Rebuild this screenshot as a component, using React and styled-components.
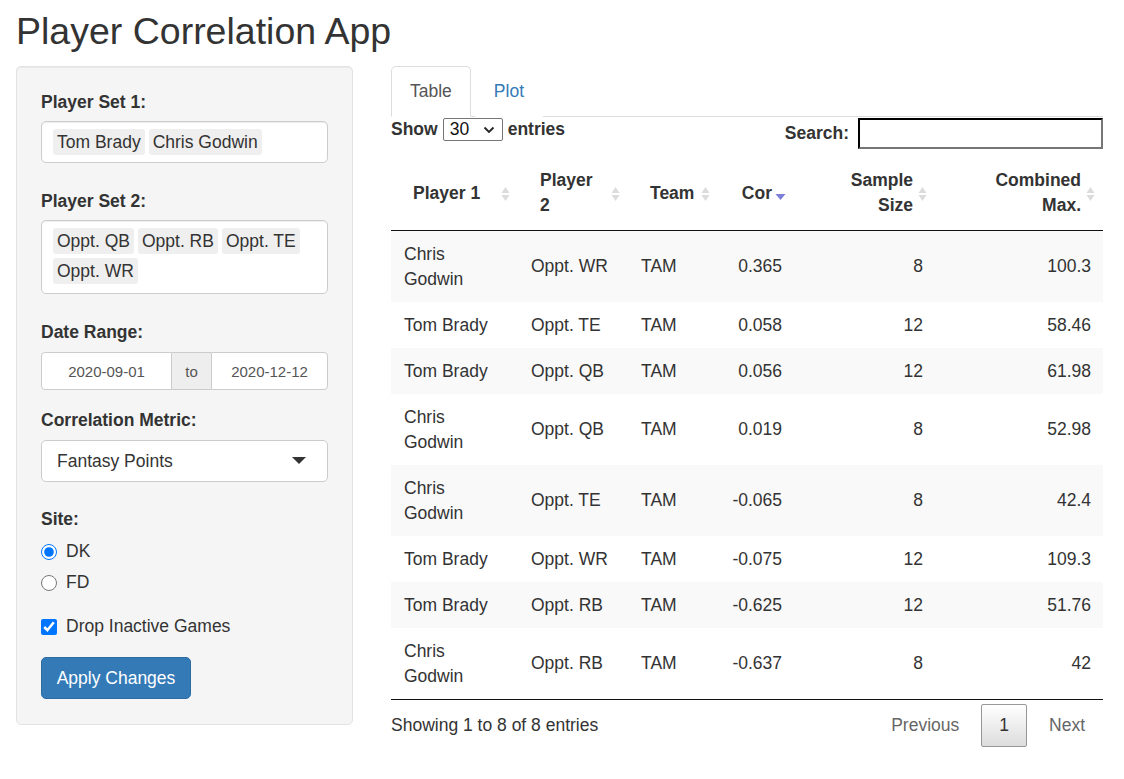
import styled, { createGlobalStyle } from 'styled-components';

const GlobalStyle = createGlobalStyle`
  html, body {
    margin: 0;
    padding: 0;
    background: #fff;
  }
  body {
    font-family: "Liberation Sans", Arial, sans-serif;
    font-size: 17.5px;
    line-height: 25px;
    color: #333;
  }
  * { box-sizing: border-box; }
`;

const rows = [
  { p1: 'Chris Godwin', p2: 'Oppt. WR', team: 'TAM', cor: '0.365', n: 8, max: '100.3' },
  { p1: 'Tom Brady', p2: 'Oppt. TE', team: 'TAM', cor: '0.058', n: 12, max: '58.46' },
  { p1: 'Tom Brady', p2: 'Oppt. QB', team: 'TAM', cor: '0.056', n: 12, max: '61.98' },
  { p1: 'Chris Godwin', p2: 'Oppt. QB', team: 'TAM', cor: '0.019', n: 8, max: '52.98' },
  { p1: 'Chris Godwin', p2: 'Oppt. TE', team: 'TAM', cor: '-0.065', n: 8, max: '42.4' },
  { p1: 'Tom Brady', p2: 'Oppt. WR', team: 'TAM', cor: '-0.075', n: 12, max: '109.3' },
  { p1: 'Tom Brady', p2: 'Oppt. RB', team: 'TAM', cor: '-0.625', n: 12, max: '51.76' },
  { p1: 'Chris Godwin', p2: 'Oppt. RB', team: 'TAM', cor: '-0.637', n: 8, max: '42' },
];

const columns = [
  { key: 'p1', label: 'Player 1', width: 127 },
  { key: 'p2', label: ['Player', '2'], width: 110 },
  { key: 'team', label: 'Team', width: 90 },
  { key: 'cor', label: 'Cor', width: 76, right: true, sorted: true },
  { key: 'n', label: ['Sample', 'Size'], width: 141, right: true },
  { key: 'max', label: ['Combined', 'Max.'], width: 168, right: true },
];

function SortBoth() {
  return (
    <svg width="9" height="16" viewBox="0 0 9 16">
      <path d="M4.5 1 L8.5 7 L0.5 7 Z" fill="#dcdcdc" />
      <path d="M4.5 15 L8.5 9 L0.5 9 Z" fill="#dcdcdc" />
    </svg>
  );
}

function SortDesc() {
  return (
    <svg width="11" height="16" viewBox="0 0 11 16">
      <path d="M0.5 8 L10.5 8 L5.5 14 Z" fill="#7b7fd8" />
    </svg>
  );
}

export default function App() {
  return (
    <Page>
      <GlobalStyle />
      <Title>Player Correlation App</Title>
      <Layout>
        <Well>
          <Group $gap={26}>
            <Label>Player Set 1:</Label>
            <Selectize>
              <Chip>Tom Brady</Chip>
              <Chip>Chris Godwin</Chip>
            </Selectize>
          </Group>
          <Group $gap={26}>
            <Label>Player Set 2:</Label>
            <Selectize $multiline>
              <Chip>Oppt. QB</Chip>
              <Chip>Oppt. RB</Chip>
              <Chip>Oppt. TE</Chip>
              <Chip>Oppt. WR</Chip>
            </Selectize>
          </Group>
          <Group $gap={18}>
            <Label $mb={7}>Date Range:</Label>
            <DateRow>
              <DateInput $width={131}>2020-09-01</DateInput>
              <DateAddon>to</DateAddon>
              <DateInput $last>2020-12-12</DateInput>
            </DateRow>
          </Group>
          <Group $gap={25}>
            <Label $mb={7}>Correlation Metric:</Label>
            <SelectBox>
              <span>Fantasy Points</span>
              <svg width="14" height="8" viewBox="0 0 14 8">
                <path d="M0 0 L14 0 L7 7 Z" fill="#333" />
              </svg>
            </SelectBox>
          </Group>
          <Group $gap={19}>
            <Label $mb={0}>Site:</Label>
            <Choice $top={7}>
              <input type="radio" name="site" defaultChecked />
              DK
            </Choice>
            <Choice $top={6}>
              <input type="radio" name="site" />
              FD
            </Choice>
          </Group>
          <Group $gap={18}>
            <Choice>
              <input type="checkbox" defaultChecked />
              Drop Inactive Games
            </Choice>
          </Group>
          <ApplyButton>Apply Changes</ApplyButton>
        </Well>

        <Main>
          <Tabs>
            <Tab $active>Table</Tab>
            <Tab>Plot</Tab>
          </Tabs>
          <Toolbar>
            <LengthLabel>
              Show
              <LengthSelect>
                30
                <svg width="12" height="8" viewBox="0 0 12 8">
                  <path d="M1.5 1.5 L6 6 L10.5 1.5" fill="none" stroke="#222" strokeWidth="1.8" />
                </svg>
              </LengthSelect>
              entries
            </LengthLabel>
            <SearchLabel>
              Search:
              <SearchInput />
            </SearchLabel>
          </Toolbar>

          <Table>
            <colgroup>
              {columns.map((c) => (
                <col key={c.key} style={{ width: c.width }} />
              ))}
            </colgroup>
            <thead>
              <tr>
                {columns.map((c) => (
                  <Th key={c.key} $right={c.right}>
                    {Array.isArray(c.label) ? (
                      <>
                        {c.label[0]}
                        <br />
                        {c.label[1]}
                      </>
                    ) : (
                      c.label
                    )}
                    <SortIcon>{c.sorted ? <SortDesc /> : <SortBoth />}</SortIcon>
                  </Th>
                ))}
              </tr>
            </thead>
            <tbody>
              {rows.map((r, i) => (
                <Tr key={i} $odd={i % 2 === 0}>
                  {columns.map((c) => (
                    <Td key={c.key} $right={c.right}>
                      {r[c.key]}
                    </Td>
                  ))}
                </Tr>
              ))}
            </tbody>
          </Table>

          <Footer>
            <Info>Showing 1 to 8 of 8 entries</Info>
            <Pager>
              <PageButton>Previous</PageButton>
              <PageButton $current>1</PageButton>
              <PageButton>Next</PageButton>
            </Pager>
          </Footer>
        </Main>
      </Layout>
    </Page>
  );
}

const Page = styled.div`
  padding: 0 21px 40px 16px;
`;

const Title = styled.h2`
  margin: 11px 0 14px 0;
  font-size: 37.5px;
  line-height: 41px;
  font-weight: 400;
  color: #333;
`;

const Layout = styled.div`
  display: flex;
  align-items: flex-start;
  gap: 38px;
`;

const Well = styled.div`
  width: 337px;
  flex-shrink: 0;
  background: #f5f5f5;
  border: 1px solid #e3e3e3;
  border-radius: 5px;
  padding: 23px 24px 25px 24px;
  box-shadow: inset 0 1px 1px rgba(0, 0, 0, 0.05);
`;

const Group = styled.div`
  display: flex;
  flex-direction: column;
  margin-bottom: ${({ $gap }) => $gap}px;
`;

const Label = styled.label`
  display: block;
  font-weight: bold;
  margin-bottom: ${({ $mb }) => ($mb ?? 6)}px;
`;

const Selectize = styled.div`
  display: flex;
  flex-wrap: wrap;
  background: #fff;
  border: 1px solid #ccc;
  border-radius: 5px;
  padding: 7px 11px ${({ $multiline }) => ($multiline ? 5 : 3)}px;
  box-shadow: inset 0 1px 1px rgba(0, 0, 0, 0.075);
`;

const Chip = styled.span`
  height: 26px;
  line-height: 26px;
  padding: 0 4px;
  margin: 0 4px 4px 0;
  background: #efefef;
  border-radius: 3px;
  color: #333;
`;

const DateRow = styled.div`
  display: flex;
  height: 38px;
  font-size: 15px;
`;

const DateInput = styled.div`
  flex: ${({ $width }) => ($width ? `0 0 ${$width}px` : '1')};
  display: flex;
  align-items: center;
  justify-content: center;
  background: #fff;
  border: 1px solid #ccc;
  border-radius: ${({ $last }) => ($last ? '0 4px 4px 0' : '4px 0 0 4px')};
  color: #555;
`;

const DateAddon = styled.div`
  width: 39px;
  display: flex;
  align-items: center;
  justify-content: center;
  background: #eee;
  border-top: 1px solid #ccc;
  border-bottom: 1px solid #ccc;
  color: #555;
`;

const SelectBox = styled.div`
  height: 42px;
  display: flex;
  align-items: center;
  justify-content: space-between;
  padding: 0 21px 0 15px;
  background: #fff;
  border: 1px solid #ccc;
  border-radius: 5px;
  color: #333;
`;

const Choice = styled.label`
  display: flex;
  align-items: center;
  height: 25px;
  margin-top: ${({ $top }) => ($top ?? 0)}px;

  input {
    width: 16px;
    height: 16px;
    margin: 0 9px 0 0;
  }
`;

const ApplyButton = styled.button`
  display: block;
  width: 150px;
  height: 42px;
  padding: 0;
  font-family: inherit;
  font-size: 17.5px;
  color: #fff;
  background: #337ab7;
  border: 1px solid #2e6da4;
  border-radius: 5px;
`;

const Main = styled.div`
  flex: 1;
  min-width: 0;
`;

const Tabs = styled.div`
  display: flex;
  border-bottom: 1px solid #ddd;
`;

const Tab = styled.div`
  padding: 12px 18px;
  line-height: 25px;
  margin: 0 4px -1px 0;
  border: 1px solid ${({ $active }) => ($active ? '#ddd' : 'transparent')};
  border-bottom-color: ${({ $active }) => ($active ? '#fff' : 'transparent')};
  border-radius: 5px 5px 0 0;
  background: #fff;
  color: ${({ $active }) => ($active ? '#555' : '#337ab7')};
`;

const Toolbar = styled.div`
  display: flex;
  justify-content: space-between;
  align-items: flex-start;
  height: 43px;
`;

const LengthLabel = styled.label`
  display: flex;
  align-items: center;
  gap: 5px;
  font-weight: bold;
  height: 25px;
`;

const LengthSelect = styled.span`
  display: inline-flex;
  align-items: center;
  justify-content: space-between;
  width: 60px;
  height: 23px;
  padding: 0 7px 0 6px;
  border: 1px solid #767676;
  border-radius: 2px;
  background: #fff;
  font-weight: normal;
  color: #111;
`;

const SearchLabel = styled.label`
  display: flex;
  align-items: center;
  gap: 9px;
  font-weight: bold;
  margin-top: 1px;
`;

const SearchInput = styled.span`
  display: block;
  width: 245px;
  height: 31px;
  border: 2px inset #767676;
  border-top-color: #222;
  border-left-color: #222;
  background: #fff;
`;

const Table = styled.table`
  width: 100%;
  table-layout: fixed;
  border-collapse: collapse;
  border-bottom: 1px solid #111;
`;

const Th = styled.th`
  position: relative;
  padding: 8px 22px 12px;
  text-align: ${({ $right }) => ($right ? 'right' : 'left')};
  font-weight: bold;
  white-space: nowrap;
  vertical-align: middle;
  border-bottom: 1px solid #111;
`;

const SortIcon = styled.span`
  position: absolute;
  right: 8px;
  top: 50%;
  margin-top: -9px;
  display: flex;
`;

const Tr = styled.tr`
  background: ${({ $odd }) => ($odd ? '#f9f9f9' : '#fff')};

  & + & td {
    border-top: 1px solid #ddd;
  }
`;

const Td = styled.td`
  padding: 10.5px 12px 10.5px 13px;
  text-align: ${({ $right }) => ($right ? 'right' : 'left')};
  vertical-align: middle;
`;

const Footer = styled.div`
  display: flex;
  justify-content: space-between;
  align-items: flex-start;
`;

const Info = styled.div`
  padding-top: 13px;
`;

const Pager = styled.div`
  display: flex;
  padding-top: 4px;
`;

const PageButton = styled.span`
  display: block;
  height: 43px;
  line-height: 25px;
  padding: 8px 17px;
  margin-left: 4px;
  border: 1px solid ${({ $current }) => ($current ? '#979797' : 'transparent')};
  border-radius: 2px;
  color: ${({ $current }) => ($current ? '#333' : '#666')};
  background: ${({ $current }) =>
    $current ? 'linear-gradient(to bottom, #fff 0%, #dcdcdc 100%)' : 'transparent'};
`;
